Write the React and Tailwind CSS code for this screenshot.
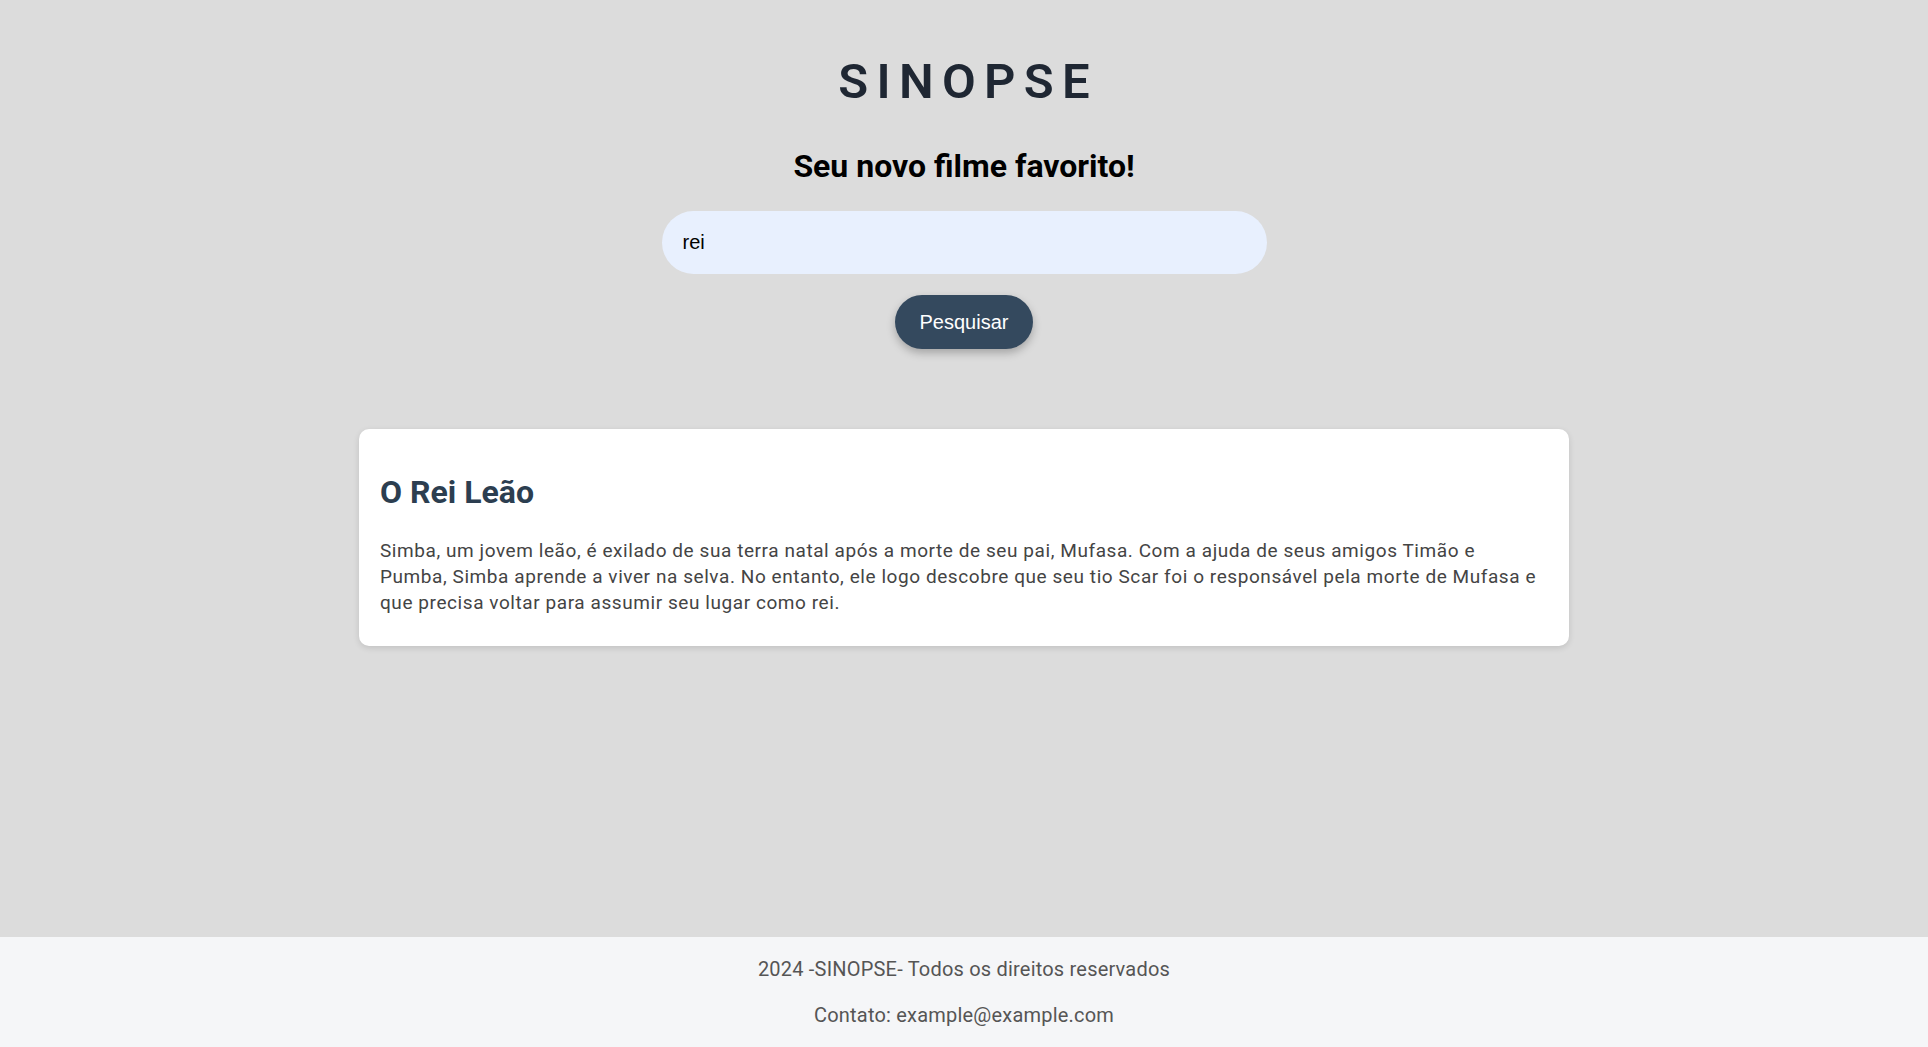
import React, { useState } from 'react'

const App = () => {
  const [query, setQuery] = useState('rei')

  return (
    <div className="min-h-screen flex flex-col bg-[#dcdcdc] font-['Roboto',sans-serif]">
      <main className="flex-1 flex flex-col items-center pt-[52px]">
        <h1 className="text-[49px] leading-[60px] font-semibold tracking-[0.17em] text-[#1f2733] pl-[0.17em]">SINOPSE</h1>
        <h2 className="mt-[36px] text-[32px] leading-[36px] font-bold text-black">Seu novo filme favorito!</h2>

        <form className="mt-[27px] flex flex-col items-center" onSubmit={e => e.preventDefault()}>
          <input
            type="text"
            value={query}
            onChange={e => setQuery(e.target.value)}
            className="w-[605px] h-[63px] rounded-full bg-[#e8f0fe] px-[21px] text-[20px] text-black outline-none font-['Liberation_Sans',Arial,sans-serif]"
          />
          <button className="mt-[21px] w-[138px] h-[54px] rounded-full bg-[#34495e] text-white text-[20px] shadow-[0_4px_8px_rgba(0,0,0,0.25)] font-['Liberation_Sans',Arial,sans-serif]">
            Pesquisar
          </button>
        </form>

        <section className="mt-[80px] w-[1210px] bg-white rounded-[10px] shadow-[0_2px_6px_rgba(0,0,0,0.12)] pl-[21px] pr-[24px] pt-[44px] pb-[30px]">
          <h3 className="text-[32px] leading-[38px] font-bold text-[#2c3e50]">O Rei Leão</h3>
          <p className="mt-[27px] text-[19px] leading-[26px] tracking-[0.03em] text-[#444]">
            Simba, um jovem leão, é exilado de sua terra natal após a morte de seu pai, Mufasa. Com a ajuda de seus amigos Timão e Pumba, Simba aprende a viver na selva. No entanto, ele logo descobre que seu tio Scar foi o responsável pela morte de Mufasa e que precisa voltar para assumir seu lugar como rei.
          </p>
        </section>
      </main>

      <footer className="h-[110px] bg-[#f5f6f8] flex flex-col items-center justify-center gap-[22px] text-[20px] leading-[24px] tracking-[0.01em] text-[#555]">
        <p>2024 -SINOPSE- Todos os direitos reservados</p>
        <p>Contato: example@example.com</p>
      </footer>
    </div>
  )
}

export default App
